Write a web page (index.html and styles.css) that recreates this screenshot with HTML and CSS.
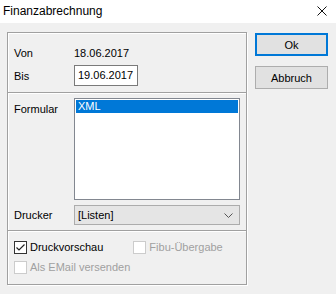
FILE: index.html
```html
<html lang="de">
<head>
    <meta charset="utf-8">
    <title>Finanzabrechnung</title>
    <link rel="stylesheet" href="styles.css">
</head>
<body>
<div class="window">
    <div class="titlebar">
        <span class="title">Finanzabrechnung</span>
        <svg class="close" width="10" height="10" viewBox="0 0 10 10">
            <path d="M0.5 0.5 L9.5 9.5 M9.5 0.5 L0.5 9.5" stroke="#111" stroke-width="1" fill="none"/>
        </svg>
    </div>
    <div class="dialog">
        <div class="panel">
            <div class="section top">
                <div class="row rowVon">
                    <span class="label">Von</span>
                    <span class="value">18.06.2017</span>
                </div>
                <div class="row rowBis">
                    <span class="label">Bis</span>
                    <span class="edit">19.06.2017</span>
                </div>
            </div>
            <div class="section middle">
                <div class="row rowList">
                    <span class="label labelTop">Formular</span>
                    <div class="listbox">
                        <div class="item selected">XML</div>
                    </div>
                </div>
                <div class="row rowCombo">
                    <span class="label">Drucker</span>
                    <div class="combo">
                        <span>[Listen]</span>
                        <svg width="9" height="5" viewBox="0 0 9 5">
                            <path d="M0.5 0.5 L4.5 4.5 L8.5 0.5" stroke="#555" stroke-width="1" fill="none"/>
                        </svg>
                    </div>
                </div>
            </div>
            <div class="section checks">
                <div class="checkRow">
                    <label class="check">
                        <span class="box checked">
                            <svg width="11" height="11" viewBox="0 0 11 11">
                                <path d="M1.5 5.5 L4 8 L9.5 2.5" stroke="#222" stroke-width="1.2" fill="none"/>
                            </svg>
                        </span>
                        Druckvorschau
                    </label>
                    <label class="check disabled fibu">
                        <span class="box"></span>
                        Fibu-Übergabe
                    </label>
                </div>
                <div class="checkRow">
                    <label class="check disabled">
                        <span class="box"></span>
                        Als EMail versenden
                    </label>
                </div>
            </div>
        </div>
        <div class="buttons">
            <div class="btn btnDefault">Ok</div>
            <div class="btn">Abbruch</div>
        </div>
    </div>
</div>
</body>
</html>
```

FILE: styles.css
```css
* {
    margin: 0;
    padding: 0;
    box-sizing: border-box;
}

body {
    width: 336px;
    height: 294px;
    overflow: hidden;
    font-family: 'Liberation Sans', Arial, sans-serif;
    font-size: 11px;
    color: #000;
    background: #f0f0f0;
}

.window {
    width: 336px;
    height: 294px;
    display: flex;
    flex-direction: column;
}

.titlebar {
    height: 23px;
    background: #ffffff;
    display: flex;
    align-items: center;
    justify-content: space-between;
    padding: 0 9px 0 3px;
}

.title {
    font-size: 12px;
    color: #000;
    margin-top: -1px;
}

.close {
    margin-top: -1px;
}

.dialog {
    flex: 1;
    display: flex;
    padding: 9px 0 0 7px;
    background: #f0f0f0;
}

.panel {
    width: 240px;
    height: 253px;
    border: 1px solid #a0a0a0;
    box-shadow: inset 1px 1px 0 #ffffff, 1px 1px 0 #ffffff;
    display: flex;
    flex-direction: column;
}

.section {
    padding: 0 6px;
}

.section + .section {
    border-top: 1px solid #a0a0a0;
    box-shadow: inset 0 1px 0 #ffffff;
}

.top {
    height: 59px;
    padding-top: 9px;
}

.middle {
    height: 138px;
    padding-top: 5px;
}

.checks {
    flex: 1;
    padding-top: 10px;
}

.row {
    display: flex;
    align-items: center;
}

.rowVon {
    height: 21px;
}

.rowBis {
    height: 21px;
    margin-top: 2px;
}

.label {
    width: 60px;
    flex-shrink: 0;
}

.value {
    padding-left: 0;
}

.edit {
    width: 64px;
    height: 21px;
    border: 1px solid #7a7a7a;
    background: #ffffff;
    padding: 3px 0 0 3px;
    line-height: 13px;
}

.rowList {
    align-items: flex-start;
}

.labelTop {
    padding-top: 5px;
}

.listbox {
    width: 166px;
    height: 102px;
    border: 1px solid #828790;
    background: #ffffff;
    padding: 1px;
}

.item {
    height: 13px;
    line-height: 13px;
    padding-left: 2px;
}

.selected {
    background: #0078d7;
    color: #ffffff;
}

.rowCombo {
    margin-top: 5px;
}

.combo {
    width: 166px;
    height: 20px;
    border: 1px solid #acacac;
    background: #e5e5e5;
    display: flex;
    align-items: center;
    justify-content: space-between;
    padding: 0 6px 0 3px;
}

.checkRow {
    display: flex;
    height: 13px;
    margin-bottom: 7px;
}

.check {
    display: flex;
    align-items: center;
    gap: 3px;
    line-height: 13px;
}

.fibu {
    margin-left: 30px;
}

.box {
    width: 13px;
    height: 13px;
    border: 1px solid #cccccc;
    background: #ffffff;
    display: flex;
    align-items: center;
    justify-content: center;
}

.box.checked {
    border-color: #333333;
}

.disabled {
    color: #a0a0a0;
}

.buttons {
    margin-left: 8px;
    padding-top: 1px;
    display: flex;
    flex-direction: column;
    gap: 10px;
}

.btn {
    width: 73px;
    height: 23px;
    background: #e1e1e1;
    border: 1px solid #adadad;
    display: flex;
    align-items: center;
    justify-content: center;
}

.btnDefault {
    border: 2px solid #0078d7;
}
```
